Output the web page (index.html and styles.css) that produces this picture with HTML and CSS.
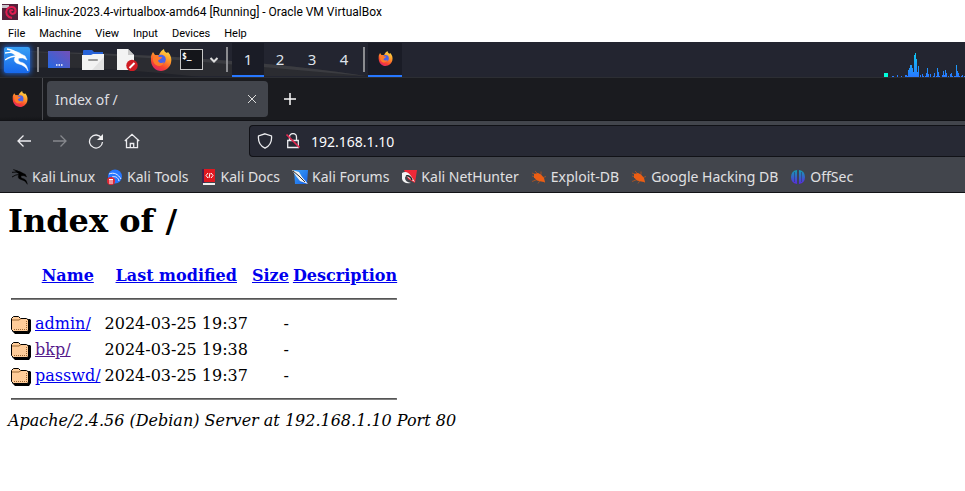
FILE: index.html
```html
<!DOCTYPE html>
<html lang="en">
<head>
<meta charset="utf-8">
<title>Index of /</title>
<link rel="stylesheet" href="styles.css">
</head>
<body>
<svg class="defs" aria-hidden="true">
  <defs>
    <linearGradient id="fox-body" x1="0.8" y1="0" x2="0.3" y2="1">
      <stop offset="0" stop-color="#ffe14a"/><stop offset="0.4" stop-color="#ff9a2a"/><stop offset="0.75" stop-color="#f8442f"/><stop offset="1" stop-color="#e0246a"/>
    </linearGradient>
    <linearGradient id="blue" x1="0" y1="0" x2="1" y2="1">
      <stop offset="0" stop-color="#3aa2f8"/><stop offset="1" stop-color="#1560e8"/>
    </linearGradient>
    <linearGradient id="desk" x1="0" y1="1" x2="1" y2="0">
      <stop offset="0" stop-color="#2468e0"/><stop offset="1" stop-color="#7450b8"/>
    </linearGradient>
    <linearGradient id="graph" x1="0" y1="0" x2="0" y2="1">
      <stop offset="0" stop-color="#10c8f0"/><stop offset="1" stop-color="#2878ff"/>
    </linearGradient>
    <linearGradient id="brain" x1="0" y1="0" x2="0" y2="1">
      <stop offset="0" stop-color="#12a0b0"/><stop offset="1" stop-color="#5b28e0"/>
    </linearGradient>
    <symbol id="firefox" viewBox="0 0 22 22">
      <path d="M1 8c0-2 1-3 2-5l2 3 4 0c1-3 3-5 5-6 0 2 1 3 3 4l1-1c3 3 4 7 3 11-1 4-5 8-10 8S0 18 1 8z" fill="url(#fox-body)"/>
      <circle cx="11" cy="10.500" r="4.800" fill="#4a62e8"/>
      <path d="M4 7c2-2 4-1 5 1h3c0 2-3 2-4 4 1 2 4 3 6 1-1 4-5 5-8 3-3-2-4-6-2-9z" fill="#ff7a2a"/>
    </symbol>
    <symbol id="dragon" viewBox="0 0 24 24">
      <path d="M0 5Q8 3 14 7M2 1Q9 2 14 7M0 12Q5 8 13 8" fill="none" stroke="currentColor" stroke-width="1.300"/>
      <path d="M5 3Q13 3 16 6l4 2 2 4-4-2-4 0q-2 2 1 4c5 1 7 3 8 9-2-4-5-6-9-7-5-1-6-5-3-8z" fill="currentColor" stroke="currentColor" stroke-width=".5"/>
    </symbol>
    <symbol id="bug" viewBox="0 0 16 16">
      <path d="M1 7l4 1M1 12.500l5-2M4 2l3 3M10 2.500l0 3M15 7.500l-3 1M7 14.500l2-3M14 13.500l-3-2M1 4l5 2" fill="none" stroke="#b4541f" stroke-width=".8"/>
      <path d="M3 5l4-1 3 1.500 3 3.500 1 4-4-.5-4-1-3-3z" fill="#ec5e14"/>
    </symbol>
    <symbol id="folder" viewBox="0 0 20 22">
      <path d="M1 7h18l1 1v11l-2 3H4l-3-3z" fill="#000"/>
      <path d="M.5 6.500l2-2h5l2 2h6l2 1.500v10l-1 1.500h-14l-2-2z" fill="#ffcc99" stroke="#000"/>
      <path d="M1 8h7l2-1.500" fill="none" stroke="#996633"/>
      <path d="M3 17.500h13M15.500 9v9" fill="none" stroke="#996633" stroke-dasharray="1 1"/>
    </symbol>
  </defs>
</svg>

<header class="titlebar">
  <svg class="icon16" viewBox="0 0 16 16"><path d="M0 0h16v16H0z" fill="#55213b"/><path d="M0 1h7v3H0z" fill="#c9c5cc"/><path d="M10 14C5 13 3 9 5 5.500S13 2 13.500 6 10 11 8.500 8.500 10 5.500 10.500 7" fill="none" stroke="#e01c50" stroke-width="2"/></svg>
  <span>kali-linux-2023.4-virtualbox-amd64 [Running] - Oracle VM VirtualBox</span>
</header>
<nav class="menubar">
  <button>File</button><button>Machine</button><button>View</button><button>Input</button><button>Devices</button><button>Help</button>
</nav>

<section class="panel">
  <svg class="streaks" viewBox="0 0 400 36" aria-hidden="true"><path d="M0 9Q220 12 366 34H0z" fill="#2b2c31"/><path d="M0 9Q220 12 366 34L250 24Q120 12 0 9" fill="#3b3c41"/><path d="M0 27Q80 22 200 35H0z" fill="#202229"/></svg>
  <button class="launcher kali" aria-label="Applications"><svg viewBox="0 0 24 24"><use href="#dragon"/></svg></button>
  <span class="divider"></span>
  <div class="launchers">
    <button class="launcher" aria-label="Desktop"><svg viewBox="0 0 22 22"><path d="M0 2h22v17H0z" fill="url(#desk)"/><path d="M8 16h1.500M10.500 16H12M13 16h1.500" stroke="#fff" stroke-width="1.500"/></svg></button>
    <button class="launcher" aria-label="Files"><svg viewBox="0 0 22 22"><path d="M1 2q0-1 1-1h8l2 2h9v6H1z" fill="#2763d8"/><path d="M0 6h9l2-1h11v16H0z" fill="#f3f3f3"/><path d="M22 8v13H10z" fill="#e2e2e2"/><path d="M7 11h8" stroke="#999" stroke-width="2" stroke-linecap="round"/></svg></button>
    <button class="launcher" aria-label="Text editor"><svg viewBox="0 0 22 22"><path d="M1 0h11l6 6v15H1z" fill="#f3f3f3"/><path d="M12 0l6 6h-6z" fill="#c8c8c8"/><circle cx="16" cy="16.500" r="5.700" fill="#cf1c23"/><path d="M13.500 19l5-5" stroke="#fff" stroke-width="2"/></svg></button>
    <button class="launcher" aria-label="Firefox"><svg><use href="#firefox"/></svg></button>
  </div>
  <button class="terminal" aria-label="Terminal">$_</button>
  <button class="chevron" aria-label="More terminals"><svg viewBox="0 0 10 6"><path d="M1.500 1L5 4.500 8.500 1" fill="none" stroke="#ddd" stroke-width="2"/></svg></button>
  <span class="divider"></span>
  <div class="workspaces"><button class="current">1</button><button>2</button><button>3</button><button>4</button></div>
  <span class="divider"></span>
  <button class="task" aria-label="Firefox window"><svg><use href="#firefox"/></svg></button>
  <svg class="graph" viewBox="0 0 81 30" aria-hidden="true">
    <path d="M0 26h4v4H0z" fill="#00ffdc"/>
    <path fill="url(#graph)" d="M8 30v-1h2v1zM13 30v-2h1v2zM17 30v-1h1v1zM21 30v-2h2v1h1v-6h1v-2h1v-3h2v3h1v4h1V8h1V6h1v6h1v13h1v-6h1v11zM36 30v-2h1v2zM38 30v-3h1v2h1v1zM41 30v-1h1v-3h1v-5h1v6h1v3zM46 30v-3h1v3zM49 30v-1h1v-3h1v4zM52 30v-1h1v-8h1v4h1v4h1v1zM58 30v-2h1v-4h1v4h1v-5h1v3h1v4zM64 30v-1h1v1zM66 30v-3h1v-1h1v3h1v1zM70 30v-1h2V18h1v6h1v2h1v3h1v1zM77 30v-1h1v-1h1v2zM80 30v-1h1v1z"/>
  </svg>
</section>

<section class="tabs">
  <button class="pinned" aria-label="Firefox"><svg><use href="#firefox"/></svg></button>
  <div class="tab"><span>Index of /</span><button aria-label="Close tab"><svg viewBox="0 0 10 10"><path d="M1 1l8 8M9 1L1 9" stroke="#ddd"/></svg></button></div>
  <button class="new-tab" aria-label="New tab"><svg viewBox="0 0 12 12"><path d="M6 0v12M0 6h12" stroke="#fbfbfb" stroke-width="1.500"/></svg></button>
</section>

<section class="toolbar">
  <div class="controls">
    <button aria-label="Back"><svg viewBox="0 0 16 16"><path d="M15 8H2M7.500 2.500L2 8l5.500 5.500"/></svg></button>
    <button aria-label="Forward" class="off"><svg viewBox="0 0 16 16"><path d="M1 8h13M8.500 2.500L14 8l-5.500 5.500"/></svg></button>
    <button aria-label="Reload"><svg viewBox="0 0 16 16"><path d="M13.500 5A6.500 6.500 0 1 0 14.500 9"/><path d="M15 1v6H9z" fill="#f0f0f0" stroke="none"/></svg></button>
    <button aria-label="Home"><svg viewBox="0 0 16 16"><path d="M.8 8L8 1.300 15.200 8M2.500 7v7.700h11V7M6.300 14.500v-4h3.400v4"/></svg></button>
  </div>
  <div class="address">
    <svg viewBox="0 0 16 16"><path d="M8 .8L14.500 3c.5 5-1 9.500-6.500 12.200C2.500 12.500 1 8 1.500 3z"/></svg>
    <svg viewBox="0 0 16 16"><path d="M2.700 7.500h10.600v7H2.700zM4.500 7.500V4a3.500 3.500 0 0 1 7 0v3.500"/><path d="M1.500 1.500l13 13" stroke="#e22850" stroke-width="1.700"/></svg>
    <input type="text" aria-label="Address" value="192.168.1.10">
  </div>
</section>

<nav class="bookmarks">
  <a href="#"><svg class="black"><use href="#dragon"/></svg>Kali Linux</a>
  <a href="#"><svg viewBox="0 0 16 16"><circle cx="8" cy="7.500" r="7" fill="#2777ff"/><path d="M2 5c5-2 9 0 12 5M5 8c3-1 6 0 7 4" fill="none" stroke="#e4eeff"/><circle cx="4" cy="12" r="4" fill="#e02735"/><path d="M2 10.500h4M3 11v4M5 11v4" stroke="#fff"/></svg>Kali Tools</a>
  <a href="#"><svg viewBox="0 0 16 16"><path d="M1 0h3v14H1z" fill="#43224e"/><path d="M3 0h11v13H3z" fill="#e01820"/><path d="M2 14h12v2H2z" fill="#eee"/><path d="M7 4L5 6.500 7 9M10 4l2 2.500L10 9M9 4L8 9" fill="none" stroke="#fff"/></svg>Kali Docs</a>
  <a href="#"><svg viewBox="0 0 16 16"><path d="M2 1h14l-1 14H3z" fill="url(#blue)"/><path d="M0 1l7 2 3 5 6 7-8-3-4-5z" fill="#f2f2f2"/><path d="M1 2l6 5 6 6" fill="none" stroke="#333"/></svg>Kali Forums</a>
  <a href="#"><svg viewBox="0 0 16 16"><path d="M3 1h13l-2 13-7-4z" fill="#ee2938"/><path d="M1 4q5-3 9 3l4 6-5-3q-5-5-5-1 0 4 6 5-8 1-9-4z" fill="#f4f4f4"/><path d="M5 7q4-1 6 4" fill="none" stroke="#222" stroke-width="1.500"/></svg>Kali NetHunter</a>
  <a href="#"><svg><use href="#bug"/></svg>Exploit-DB</a>
  <a href="#"><svg><use href="#bug"/></svg>Google Hacking DB</a>
  <a href="#"><svg viewBox="0 0 16 16"><path d="M7 1v14Q1 14 1 8T7 1zM9 1v14q6-1 6-7T9 1z" fill="url(#brain)"/><path d="M8 0v16M4.500 3v10M11.500 3v10" stroke="#304078" stroke-width=".7"/></svg>OffSec</a>
</nav>

<main class="page">
  <h1>Index of /</h1>
  <table>
    <tr><th><svg class="folder" aria-hidden="true"></svg></th><th><a href="#">Name</a></th><th><a href="#">Last modified</a></th><th><a href="#">Size</a></th><th><a href="#">Description</a></th></tr>
    <tr><th colspan="5"><hr></th></tr>
    <tr><td><svg class="folder"><use href="#folder"/></svg></td><td><a href="#">admin/</a></td><td class="num">2024-03-25 19:37</td><td class="num">-</td><td></td></tr>
    <tr><td><svg class="folder"><use href="#folder"/></svg></td><td><a href="#" class="seen">bkp/</a></td><td class="num">2024-03-25 19:38</td><td class="num">-</td><td></td></tr>
    <tr><td><svg class="folder"><use href="#folder"/></svg></td><td><a href="#">passwd/</a></td><td class="num">2024-03-25 19:37</td><td class="num">-</td><td></td></tr>
    <tr><th colspan="5"><hr></th></tr>
  </table>
  <address>Apache/2.4.56 (Debian) Server at 192.168.1.10 Port 80</address>
</main>
</body>
</html>
```
FILE: styles.css
```css
* { box-sizing: border-box; }
body { margin: 0; background: #fff; color: #000; overflow: hidden; }
button { padding: 0; border: 0; background: none; color: inherit; font: inherit; }
svg { display: block; flex: none; }
.defs { position: absolute; width: 0; height: 0; }

.titlebar, .menubar { display: flex; align-items: center; font-family: Roboto, sans-serif; }
.titlebar { height: 24px; padding-left: 2px; gap: 5px; font-size: 12px; }
.icon16 { width: 16px; height: 16px; }
.menubar { height: 18px; padding-left: 8px; gap: 14px; font-size: 11px; }

.panel {
  position: relative; display: flex; align-items: center; height: 36px; padding-left: 4px;
  background: #232530; border-bottom: 1px solid #2c2e33; color: #dfe3ea;
  font-family: "Noto Sans", sans-serif; font-size: 15px; overflow: hidden;
}
.panel > * { position: relative; flex: none; }
.panel > .streaks { position: absolute; left: 0; top: 0; width: 400px; height: 36px; }
.launcher svg { width: 22px; height: 22px; }
.kali { width: 26px; height: 26px; padding: 1px; border-radius: 2px; background: linear-gradient(#38a0f4, #1768ec); box-shadow: 0 0 5px 1px #1c60d0; color: #fff; }
.kali svg { width: 24px; height: 24px; }
.divider { width: 2px; height: 25px; margin-left: 7px; background: #8b8c90; }
.launchers { display: flex; gap: 12px; margin-left: 9px; }
.terminal { width: 23px; height: 21px; margin-left: 8px; padding: 0 0 6px 1px; border: 1px solid #c8c8c8; background: #14151a; color: #fff; font: bold 8px "DejaVu Sans Mono", monospace; text-align: left; }
.chevron { margin-left: 6px; }
.chevron svg { width: 10px; height: 6px; }
.workspaces { display: flex; margin-left: 4px; }
.workspaces button { width: 32px; height: 34px; padding-bottom: 2px; }
.workspaces + .divider { margin-left: 3px; }
.workspaces .current, .task { background: #1a1c26; border-bottom: 2px solid #2777ff; }
.workspaces .current { padding-bottom: 0; }
.task { display: grid; place-items: center; width: 34px; height: 34px; margin-left: 3px; }
.task svg { width: 15px; height: 15px; }
.panel > .graph { width: 81px; height: 30px; margin-left: auto; align-self: flex-end; }

.tabs { display: flex; align-items: center; height: 43px; background: radial-gradient(ellipse at 50px 44px, #101114, #1a1b1f 120px); border-bottom: 1px solid #111216; color: #dedee0; font: 14px "Noto Sans", sans-serif; }
.pinned { display: grid; place-items: center; width: 43px; align-self: stretch; padding-right: 2px; border-right: 1px solid #4a4b50; }
.pinned svg { width: 16px; height: 16px; }
.tab { display: flex; align-items: center; justify-content: space-between; width: 221px; height: 36px; margin-left: 4px; padding: 0 11px 0 8px; border-radius: 4px; background: #42454c; }
.tab svg { width: 10px; height: 10px; }
.new-tab { margin-left: 16px; }
.new-tab svg { width: 12px; height: 12px; }

.toolbar { display: flex; align-items: center; height: 40px; padding-left: 16px; background: #42454c; }
.controls { display: flex; gap: 20px; width: 233px; }
.controls svg, .address svg { width: 16px; height: 16px; fill: none; stroke: #ececef; stroke-width: 1.3; }
.controls .off { opacity: .4; }
.address { display: flex; align-items: center; flex: 1; height: 32px; padding-left: 7px; gap: 12px; border: 1px solid #111217; border-right: 0; border-radius: 4px 0 0 4px; background: #272934; }
.address input { flex: 1; min-width: 0; margin-left: -2px; padding: 0; border: 0; outline: 0; background: none; color: #fbfbfe; font: 14px "Noto Sans", sans-serif; }
.bookmarks { display: flex; align-items: center; gap: 12px; height: 32px; padding-left: 12px; background: #42454c; border-bottom: 1px solid #111216; font: 14px "Noto Sans", sans-serif; }
.bookmarks a { display: flex; align-items: center; gap: 4px; color: #e0e0e2; text-decoration: none; white-space: nowrap; }
.bookmarks svg { width: 16px; height: 16px; }
.black { color: #000; }

.page { padding: 10px 8px; font: 16px "DejaVu Serif", serif; }
.page h1 { margin: 0 0 21px; font-size: 32px; line-height: 37px; }
.page a { color: #0000ee; }
.page a.seen { color: #551a8b; }
.page hr { margin: 8px 0; border: 1px solid; border-color: #555 #808080 #808080 #555; }
.folder { width: 20px; height: 22px; }
.num { text-align: right; }
```
